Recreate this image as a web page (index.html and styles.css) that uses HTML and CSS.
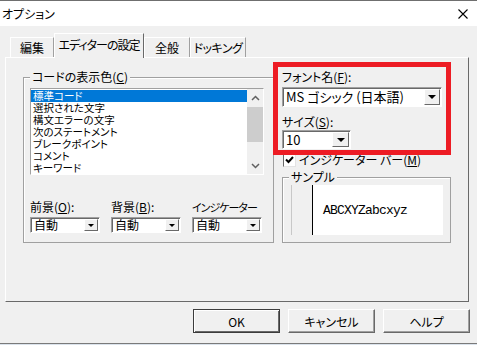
FILE: index.html
```html
<!DOCTYPE html>
<html lang="ja">
<head>
    <meta charset="UTF-8">
    <title>オプション</title>
    <link rel="stylesheet" href="styles.css">
</head>
<body>
    <header class="titlebar">
        <span>オプション</span>
        <svg class="close" width="10" height="10" viewBox="0 0 10 10">
            <path d="M0.5 0.5 L9.5 9.5 M9.5 0.5 L0.5 9.5" stroke="#000" stroke-width="1.1" fill="none"/>
        </svg>
    </header>

    <div class="tabs">
        <div class="tab tab-edit">編集</div>
        <div class="tab tab-active">エディターの設定</div>
        <div class="tab tab-general">全般</div>
        <div class="tab tab-dock">ドッキング</div>
    </div>

    <div class="panel">
        <div class="group colors">
            <div class="group-title">コードの表示色(<u>C</u>)</div>
            <div class="list">
                <div class="items">
                    <div class="item selected">標準コード</div>
                    <div class="item">選択された文字</div>
                    <div class="item">構文エラーの文字</div>
                    <div class="item">次のステートメント</div>
                    <div class="item">ブレークポイント</div>
                    <div class="item">コメント</div>
                    <div class="item">キーワード</div>
                </div>
                <div class="scrollbar">
                    <div class="arrow">
                        <svg width="9" height="6" viewBox="0 0 9 6"><path d="M1 5 L4.5 1.5 L8 5" stroke="#606060" stroke-width="1.5" fill="none"/></svg>
                    </div>
                    <div class="track"><div class="thumb"></div></div>
                    <div class="arrow">
                        <svg width="9" height="6" viewBox="0 0 9 6"><path d="M1 1 L4.5 4.5 L8 1" stroke="#606060" stroke-width="1.5" fill="none"/></svg>
                    </div>
                </div>
            </div>
            <div class="pickers">
                <div class="picker">
                    <div class="label">前景(<u>O</u>):</div>
                    <div class="combo combo-small"><span class="value">自動</span><span class="drop"><i class="tri"></i></span></div>
                </div>
                <div class="picker">
                    <div class="label">背景(<u>B</u>):</div>
                    <div class="combo combo-small"><span class="value">自動</span><span class="drop"><i class="tri"></i></span></div>
                </div>
                <div class="picker">
                    <div class="label label-narrow">インジケーター</div>
                    <div class="combo combo-small"><span class="value">自動</span><span class="drop"><i class="tri"></i></span></div>
                </div>
            </div>
        </div>

        <div class="fontcol">
            <div class="label">フォント名(<u>F</u>):</div>
            <div class="combo combo-font"><span class="value">MS ゴシック (日本語)</span><span class="drop"><i class="tri tri-big"></i></span></div>
            <div class="label label-size">サイズ(<u>S</u>):</div>
            <div class="combo combo-size"><span class="value">10</span><span class="drop"><i class="tri tri-big"></i></span></div>
            <div class="check-row">
                <span class="checkbox">
                    <svg width="9" height="8" viewBox="0 0 9 8"><path d="M1 3.5 L3.5 6 L8 1" stroke="#000" stroke-width="2" fill="none"/></svg>
                </span>
                <span>インジケーター バー(<u>M</u>)</span>
            </div>
            <div class="group sample">
                <div class="group-title">サンプル</div>
                <div class="sample-box">
                    <div class="gutter"></div>
                    <div class="sample-text">ABCXYZabcxyz</div>
                </div>
            </div>
        </div>
    </div>

    <div class="buttons">
        <button class="default">OK</button>
        <button>キャンセル</button>
        <button>ヘルプ</button>
    </div>
    <div class="edge"></div>

    <div class="highlight"></div>
</body>
</html>
```

FILE: styles.css
```css
* {
    box-sizing: border-box;
}

body {
    margin: 0;
    width: 477px;
    height: 345px;
    overflow: hidden;
    position: relative;
    background-color: #f0f0f0;
    color: #000;
    font-family: "Noto Sans CJK JP", sans-serif;
    font-size: 12px;
    font-feature-settings: "palt";
}

u {
    text-decoration-thickness: 1px;
    text-underline-offset: 1px;
}

.titlebar {
    height: 26px;
    border-top: 1px solid #6f6f6f;
    background-color: #fff;
    display: flex;
    align-items: center;
    justify-content: space-between;
    padding: 0 9px 0 2px;
    line-height: 14px;
}

.tabs {
    height: 31px;
    display: flex;
    align-items: flex-end;
    padding-left: 10px;
}

.tab {
    height: 20px;
    display: flex;
    align-items: center;
    justify-content: center;
    border: 1px solid;
    border-color: #fff #a0a0a0 transparent #fff;
    border-bottom: none;
    line-height: 14px;
    white-space: nowrap;
}

.tab-edit { width: 44px; }
.tab-general { width: 46px; }
.tab-dock { width: 56px; letter-spacing: -0.5px; }

.tab-active {
    width: 90px;
    height: 25px;
    margin-bottom: -1px;
    padding-bottom: 2px;
    position: relative;
    z-index: 1;
    background-color: #f0f0f0;
    border-right-color: #696969;
    letter-spacing: -1px;
}

.panel {
    height: 245px;
    margin: 0 8px 0 5px;
    border: 1px solid;
    border-color: #fff #696969 #696969 #fff;
    display: flex;
    align-items: flex-start;
}

.group {
    border: 1px solid #a0a0a0;
    box-shadow: inset 1px 1px 0 #fff;
}

.group-title {
    display: table;
    margin: -8px 0 0 6px;
    padding: 0 2px;
    background-color: #f0f0f0;
    line-height: 14px;
    white-space: nowrap;
}

.colors {
    width: 251px;
    height: 166px;
    margin: 19px 0 0 17px;
}

.list {
    display: flex;
    width: 234px;
    height: 87px;
    margin: 4px 0 0 6px;
    border: 1px solid;
    border-color: #a0a0a0 #fff #fff #a0a0a0;
    background-color: #fff;
}

.items {
    flex: 1;
    padding-top: 1px;
    font-size: 10.5px;
}

.item {
    height: 12px;
    line-height: 12px;
    padding-left: 2px;
    white-space: nowrap;
}

.item.selected {
    background-color: #0078d7;
    color: #fff;
}

.scrollbar {
    width: 16px;
    display: flex;
    flex-direction: column;
    background-color: #f0f0f0;
}

.arrow {
    height: 17px;
    display: flex;
    align-items: center;
    justify-content: center;
}

.track {
    flex: 1;
}

.thumb {
    height: 35px;
    margin-top: 1px;
    background-color: #cdcdcd;
}

.pickers {
    display: flex;
    gap: 11px;
    margin: 25px 0 0 6px;
}

.picker {
    width: 70px;
}

.label {
    line-height: 14px;
    white-space: nowrap;
}

.label-narrow {
    font-size: 11px;
    letter-spacing: -1px;
}

.combo {
    display: flex;
    align-items: center;
    background-color: #fff;
    border: 1px solid;
    border-color: #a0a0a0 #fff #fff #a0a0a0;
    box-shadow: inset 1px 1px 0 #696969;
    padding: 1px;
}

.combo .value {
    flex: 1;
    padding-left: 2px;
    line-height: 14px;
    white-space: nowrap;
}

.drop {
    align-self: stretch;
    display: flex;
    align-items: center;
    justify-content: center;
    background-color: #f0f0f0;
    border: 1px solid;
    border-color: #fff #696969 #696969 #fff;
}

.tri {
    width: 0;
    height: 0;
    border-top: 3px solid #000;
    border-left: 3px solid transparent;
    border-right: 3px solid transparent;
}

.tri-big {
    border-top-width: 4px;
    border-left-width: 4px;
    border-right-width: 4px;
}

.combo-small {
    margin-top: 3px;
    height: 16px;
}

.combo-small .drop {
    width: 14px;
}

.fontcol {
    width: 169px;
    margin: 12px 0 0 8px;
}

.combo-font {
    width: 160px;
    height: 20px;
    margin-top: 3px;
    font-size: 13px;
}

.combo-font .drop {
    width: 16px;
}

.label-size {
    margin-top: 8px;
}

.combo-size {
    width: 69px;
    height: 19px;
    margin-top: 1px;
    font-size: 13px;
}

.combo-size .drop {
    width: 17px;
}

.check-row {
    display: flex;
    align-items: center;
    gap: 3px;
    height: 16px;
    margin: 3px 0 0 1px;
    line-height: 14px;
    white-space: nowrap;
}

.checkbox {
    width: 13px;
    height: 13px;
    display: flex;
    align-items: center;
    justify-content: center;
    background-color: #fff;
    border: 1px solid;
    border-color: #696969 #e3e3e3 #e3e3e3 #696969;
}

.sample {
    height: 66px;
    margin-top: 9px;
}

.sample-box {
    display: flex;
    width: 152px;
    height: 50px;
    margin: 1px 0 0 8px;
    background-color: #fff;
    border-left: 1px solid #c8c8c8;
}

.gutter {
    width: 21px;
    background-color: #f0f0f0;
    border-right: 1px solid #000;
}

.sample-text {
    align-self: center;
    padding-left: 10px;
    font-family: "Liberation Mono", monospace;
    font-size: 13px;
    letter-spacing: -0.8px;
}

.buttons {
    display: flex;
    justify-content: flex-end;
    gap: 8px;
    padding-right: 7px;
    margin-top: 7px;
}

button {
    width: 87px;
    height: 24px;
    padding: 0;
    font-family: inherit;
    font-size: 12px;
    font-feature-settings: "palt";
    color: #000;
    background-color: #f0f0f0;
    border: 1px solid;
    border-color: #fff #696969 #696969 #fff;
    box-shadow: inset -1px -1px 0 #a0a0a0;
}

button.default {
    border-color: #3c3c3c;
    box-shadow: inset 1px 1px 0 #fff, inset -1px -1px 0 #696969;
}

.edge {
    height: 2px;
    margin-top: 10px;
    border-top: 1px solid #7a7a7a;
    background-color: #dbe3ec;
}

.highlight {
    position: absolute;
    left: 273px;
    top: 62px;
    width: 178px;
    height: 93px;
    border: 5px solid #ed1c24;
}
```
